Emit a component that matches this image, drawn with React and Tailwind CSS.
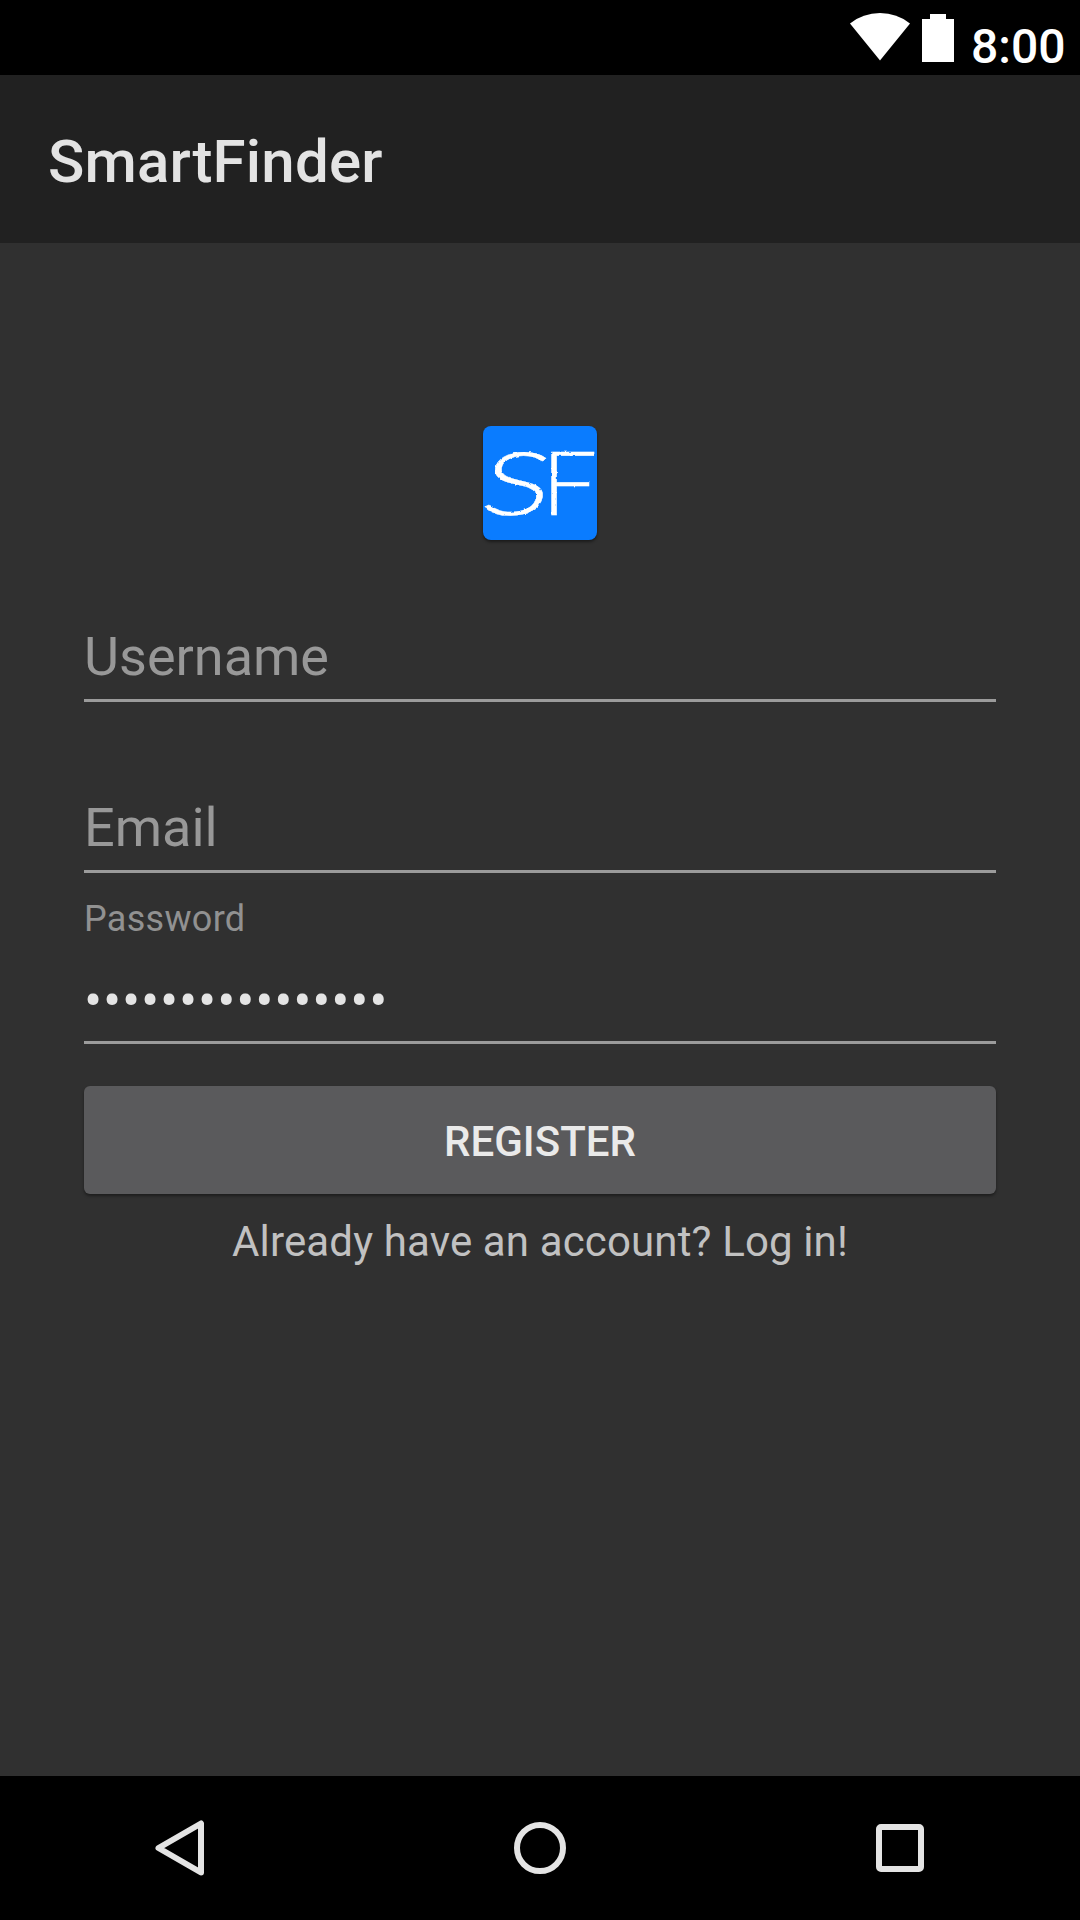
function StatusBar() {
  return (
    <div className="flex h-[75px] items-start bg-black pl-[850px]">
      <svg className="mt-[13px] h-[48px] w-[60px]" viewBox="0 0 60 48" fill="#fff">
        <path d="M30 47.5 L0 10.5 Q13 0 30 0 Q47 0 60 10.5 Z" />
      </svg>
      <svg className="mt-[14px] ml-[12px] h-[48px] w-[32px]" viewBox="0 0 32 48" fill="#fff">
        <path d="M8 0H24V5H32V48H0V5H8Z" />
      </svg>
      <span className="mt-[19px] ml-[17px] text-[48px] leading-[56px] font-medium whitespace-nowrap text-white">
        8:00
      </span>
    </div>
  );
}

function Logo() {
  return (
    <div className="mx-auto mt-[183px] h-[114px] w-[114px] rounded-[8px] bg-[#0a7cff] shadow-[0_2px_3px_rgba(0,0,0,0.45)]">
      <svg className="h-full w-full overflow-visible" viewBox="0 0 114 114" fill="#fff">
        <filter id="rough">
          <feTurbulence type="fractalNoise" baseFrequency="0.2" numOctaves="2" seed="4" />
          <feDisplacementMap in="SourceGraphic" scale="2.5" xChannelSelector="R" yChannelSelector="G" />
        </filter>
        <g filter="url(#rough)" fontFamily="Lato" fontSize="88" fontWeight="300" stroke="#fff">
          <text transform="translate(-5 89) skewX(-9) scale(1.46 1)" strokeWidth="0.3">S</text>
          <text transform="translate(58 89) scale(1.14 1)" strokeWidth="0.3">F</text>
        </g>
      </svg>
    </div>
  );
}

function Field({ label, className }) {
  return (
    <div className={className}>
      <div className="text-[54px] leading-[64px] text-[#989898]">{label}</div>
    </div>
  );
}

function NavigationBar() {
  return (
    <div className="flex h-[144px] items-center justify-around bg-black">
      <svg className="h-[60px] w-[60px]" viewBox="0 0 60 60" fill="none" stroke="#e4e4e4" strokeWidth="6" strokeLinejoin="round">
        <path d="M51 5.500V54.500L8.500 30Z" />
      </svg>
      <svg className="h-[60px] w-[60px]" viewBox="0 0 60 60" fill="none" stroke="#e4e4e4" strokeWidth="6">
        <circle cx="30" cy="30" r="23" />
      </svg>
      <svg className="h-[60px] w-[60px]" viewBox="0 0 60 60" fill="none" stroke="#e4e4e4" strokeWidth="6">
        <rect x="9" y="9" width="42" height="42" rx="2" />
      </svg>
    </div>
  );
}

export default function App() {
  return (
    <div className="flex h-[1920px] w-[1080px] flex-col overflow-hidden bg-[#303030] font-['Roboto',sans-serif]">
      <StatusBar />
      <header className="flex h-[168px] items-center bg-[#212121] pt-[6px] pl-[48px]">
        <h1 className="text-[60px] leading-[70px] font-medium tracking-[0.2px] text-[#e3e3e3]">SmartFinder</h1>
      </header>
      <main className="flex flex-1 flex-col px-[84px]">
        <Logo />
        <Field label="Username" className="mt-[85px] h-[77px] border-b-[3px] border-[#9b9b9b]" />
        <Field label="Email" className="mt-[94px] h-[77px] border-b-[3px] border-[#9b9b9b]" />
        <div className="mt-[25px] h-[146px] border-b-[3px] border-[#9b9b9b]">
          <div className="text-[36px] leading-[42px] tracking-[0.3px] text-[#919191]">Password</div>
          <div className="mt-[29px] text-[54px] leading-[64px] tracking-[0.8px] whitespace-nowrap text-[#e4e4e4]">
            ••••••••••••••••
          </div>
        </div>
        <button className="mt-[42px] h-[108px] rounded-[6px] bg-[#5a5a5c] pt-[4px] text-[42px] leading-[50px] font-medium text-[#eaeaea] shadow-[0_2px_3px_rgba(0,0,0,0.4)]">
          REGISTER
        </button>
        <p className="mt-[23px] text-center text-[42px] leading-[50px] tracking-[0.14px] text-[#c1c1c1]">
          Already have an account? Log in!
        </p>
      </main>
      <NavigationBar />
    </div>
  );
}
